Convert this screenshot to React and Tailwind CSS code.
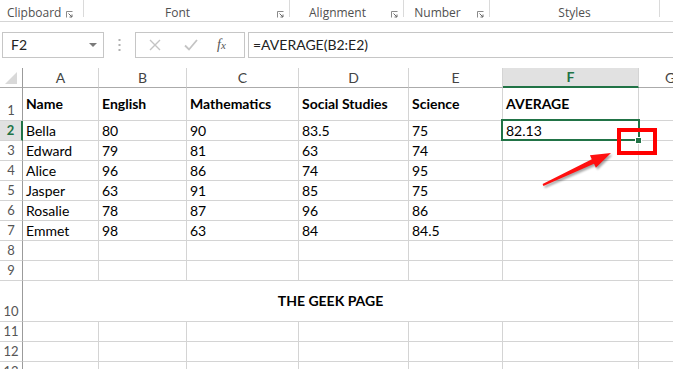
import React from "react";

const COLS = [
  { key: "A", w: "w-[76px]" },
  { key: "B", w: "w-[88px]" },
  { key: "C", w: "w-[112px]" },
  { key: "D", w: "w-[110px]" },
  { key: "E", w: "w-[94px]" },
  { key: "F", w: "w-[136px]" },
];

const DATA = [
  ["Name", "English", "Mathematics", "Social Studies", "Science", "AVERAGE"],
  ["Bella", "80", "90", "83.5", "75", "82.13"],
  ["Edward", "79", "81", "63", "74", ""],
  ["Alice", "96", "86", "74", "95", ""],
  ["Jasper", "63", "91", "85", "75", ""],
  ["Rosalie", "78", "87", "96", "86", ""],
  ["Emmet", "98", "63", "84", "84.5", ""],
];

const cellFont = { fontFamily: "Lato, 'Open Sans', sans-serif" };

function Launcher() {
  return (
    <svg width="7" height="7" viewBox="0 0 7 7" className="shrink-0">
      <path d="M0.5 6.5 V0.5 H6.5" stroke="#8a8a8a" fill="none" strokeWidth="1" />
      <path d="M2.5 2.5 L6 6 M3.5 6 H6 V3.5" stroke="#6a6a6a" fill="none" strokeWidth="1" />
    </svg>
  );
}

function Group({ w, label, launcher, pr }) {
  return (
    <div className={`${w} h-[17px] border-r border-[#dadada] flex items-start justify-center pt-[7px] shrink-0 relative ${pr}`}>
      <span className="text-[12px] text-[#505050] leading-none">{label}</span>
      {launcher && (
        <span className="absolute right-[5px] top-[11px]">
          <Launcher />
        </span>
      )}
    </div>
  );
}

function RowHeader({ n, active, bottom }) {
  return (
    <div
      className={`w-[23px] shrink-0 flex justify-center ${bottom ? "items-end pb-[3px]" : "items-center"} ${
        active
          ? "bg-[#e1e1e1] border-r-2 border-r-[#217346] text-[#217346] font-bold"
          : "border-r border-r-[#9b9b9b] text-[#555]"
      } border-b border-b-[#d4d4d4] text-[13px] leading-none`}
      style={cellFont}
    >
      {n}
    </div>
  );
}

function Cell({ w, children, bold }) {
  return (
    <div
      className={`${w} shrink-0 border-r border-b border-[#d4d4d4] flex items-center pl-[3px] text-[14px] text-black leading-none whitespace-nowrap overflow-visible ${
        bold ? "font-bold" : ""
      }`}
      style={cellFont}
    >
      {children}
    </div>
  );
}

function DataRow({ n, h, values, bold, active }) {
  return (
    <div className={`flex ${h}`}>
      <RowHeader n={n} active={active} bottom={h !== "h-[20px]"} />
      {COLS.map((c, i) => (
        <Cell key={c.key} w={c.w} bold={bold}>
          {values ? values[i] : ""}
        </Cell>
      ))}
      <div className="flex-1 border-b border-[#d4d4d4]" />
    </div>
  );
}

export default function App() {
  return (
    <div className="w-[673px] h-[369px] bg-white overflow-hidden relative" style={{ fontFamily: "'Open Sans', sans-serif" }}>
      {/* Ribbon group labels */}
      <div className="h-[22px] border-b border-[#d5d5d5] flex items-start">
        <div className="w-[84px] h-[17px] border-r border-[#dadada] flex items-start pt-[7px] pl-[7px] shrink-0 relative">
          <span className="text-[12px] text-[#505050] leading-none">Clipboard</span>
          <span className="absolute right-[10px] top-[11px]"><Launcher /></span>
        </div>
        <Group w="w-[206px]" label="Font" launcher pr="pr-[18px]" />
        <Group w="w-[114px]" label="Alignment" launcher pr="pr-[18px]" />
        <Group w="w-[86px]" label="Number" launcher pr="pr-[18px]" />
        <Group w="w-[170px]" label="Styles" pr="pr-0" />
      </div>

      {/* Formula bar */}
      <div className="h-[46px] flex items-start pt-[10px]">
        <div className="ml-[2px] w-[102px] h-[26px] border border-[#c6c6c6] flex items-center justify-between pl-[8px] pr-[6px] shrink-0">
          <span className="text-[14px] text-[#222] leading-none" style={cellFont}>F2</span>
          <svg width="8" height="5" viewBox="0 0 8 5"><path d="M0 0 H8 L4 4 Z" fill="#7a7a7a" /></svg>
        </div>
        <div className="w-[31px] h-[26px] flex items-center justify-center shrink-0">
          <svg width="3" height="12" viewBox="0 0 3 12">
            <rect x="0.5" y="0" width="2" height="2" fill="#b0b0b0" />
            <rect x="0.5" y="5" width="2" height="2" fill="#b0b0b0" />
            <rect x="0.5" y="10" width="2" height="2" fill="#b0b0b0" />
          </svg>
        </div>
        <div className="w-[110px] h-[26px] border border-[#c6c6c6] flex items-center shrink-0">
          <svg width="14" height="14" viewBox="0 0 14 14" className="ml-[12px]">
            <path d="M2 2 L12 12 M12 2 L2 12" stroke="#c4c4c4" strokeWidth="1.4" />
          </svg>
          <svg width="14" height="14" viewBox="0 0 14 14" className="ml-[22px]">
            <path d="M1 7.5 L5 11.5 L13 2" stroke="#c4c4c4" strokeWidth="1.8" fill="none" />
          </svg>
          <span className="ml-[19px] text-[14px] text-[#555] italic leading-none" style={{ fontFamily: "'Liberation Serif', serif" }}>
            f<span className="text-[11px]">x</span>
          </span>
        </div>
        <div className="ml-[3px] flex-1 h-[26px] border-t border-b border-l border-[#c6c6c6] flex items-center pl-[4px]">
          <span className="text-[14px] text-[#222] leading-none" style={cellFont}>=AVERAGE(B2:E2)</span>
        </div>
      </div>

      {/* Grid */}
      <div className="relative">
        {/* column headers */}
        <div className="flex h-[20px]">
          <div className="w-[23px] shrink-0 border-r border-r-[#9b9b9b] border-b border-b-[#ababab] relative">
            <svg width="12" height="12" viewBox="0 0 12 12" className="absolute right-[5px] bottom-[3px]">
              <path d="M12 0 V12 H0 Z" fill="#d9d9d9" />
            </svg>
          </div>
          {COLS.map((c) =>
            c.key === "F" ? (
              <div
                key={c.key}
                className={`${c.w} shrink-0 bg-[#e1e1e1] border-r border-r-[#d4d4d4] border-b-2 border-b-[#217346] flex items-center justify-center text-[14px] text-[#217346] font-bold leading-none`}
                style={cellFont}
              >
                {c.key}
              </div>
            ) : (
              <div
                key={c.key}
                className={`${c.w} shrink-0 border-r border-r-[#d4d4d4] border-b border-b-[#ababab] flex items-center justify-center text-[14px] text-[#444] leading-none`}
                style={cellFont}
              >
                {c.key}
              </div>
            )
          )}
          <div className="flex-1 border-b border-b-[#ababab] flex items-center pl-[26px] text-[14px] text-[#444] leading-none" style={cellFont}>
            G
          </div>
        </div>

        <DataRow n="1" h="h-[33px]" values={DATA[0]} bold />
        {DATA.slice(1).map((v, i) => (
          <DataRow key={i} n={String(i + 2)} h="h-[20px]" values={v} active={i === 0} />
        ))}
        <DataRow n="8" h="h-[20px]" />
        <DataRow n="9" h="h-[20px]" />

        {/* Row 10 merged */}
        <div className="flex h-[41px]">
          <RowHeader n="10" bottom />
          <div
            className="w-[616px] shrink-0 border-r border-b border-[#d4d4d4] flex items-center justify-center text-[14px] font-bold text-black leading-none"
            style={cellFont}
          >
            THE GEEK PAGE
          </div>
          <div className="flex-1 border-b border-[#d4d4d4]" />
        </div>
        <DataRow n="11" h="h-[20px]" />
        <DataRow n="12" h="h-[20px]" />
        <DataRow n="13" h="h-[20px]" />

        {/* Selection border around F2 */}
        <div className="absolute left-[501px] top-[51px] w-[139px] h-[22px] border-2 border-[#217346]" />
        <div className="absolute left-[635px] top-[69px] w-[7px] h-[7px] bg-white" />
        <div className="absolute left-[636px] top-[70px] w-[5px] h-[5px] bg-[#217346]" />

        {/* Red highlight box */}
        <div className="absolute left-[617px] top-[60px] w-[40px] h-[27px] border-4 border-[#ff0000]" />

        {/* Red arrow */}
        <svg width="90" height="55" viewBox="0 0 90 55" className="absolute left-[535px] top-[77px]">
          <defs>
            <filter id="sh" x="-20%" y="-20%" width="140%" height="160%">
              <feGaussianBlur stdDeviation="1.2" />
            </filter>
          </defs>
          <polygon
            points="7.6,39.1 56.8,14.2 54.9,10.2 76,8 60.9,22.8 59,18.8 8.4,40.9"
            fill="#000"
            opacity="0.35"
            transform="translate(1.5,2)"
            filter="url(#sh)"
          />
          <polygon points="7.6,39.1 56.8,14.2 54.9,10.2 76,8 60.9,22.8 59,18.8 8.4,40.9" fill="#ff1010" />
        </svg>
      </div>
    </div>
  );
}
